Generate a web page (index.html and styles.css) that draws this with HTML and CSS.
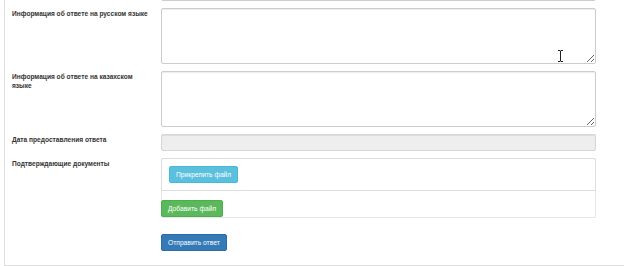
FILE: index.html
```html
<!DOCTYPE html>
<html lang="ru">
<head>
<meta charset="utf-8">
<title>Ответ</title>
<link rel="stylesheet" href="styles.css">
</head>
<body>
<div class="panel">
  <form class="form">
    <div class="row">
      <div class="label"></div>
      <div class="field"><input class="control" type="text"></div>
    </div>
    <div class="row">
      <label class="label">Информация об ответе на русском языке</label>
      <div class="field cursor-host">
        <textarea class="control area"></textarea>
        <svg class="ibeam" width="7" height="12" viewBox="0 0 7 12"><path d="M1 0.5h2l0.5 0.5 0.5-0.5h2M3.5 1v10M1 11.5h2l0.5-0.5 0.5 0.5h2" fill="none" stroke="#222" stroke-width="1"/></svg>
      </div>
    </div>
    <div class="row">
      <label class="label">Информация об ответе на казахском языке</label>
      <div class="field"><textarea class="control area"></textarea></div>
    </div>
    <div class="row">
      <label class="label">Дата предоставления ответа</label>
      <div class="field"><input class="control disabled" type="text" disabled></div>
    </div>
    <div class="row">
      <label class="label">Подтверждающие документы</label>
      <div class="field">
        <div class="files">
          <div class="attach"><button type="button" class="btn btn-info">Прикрепить файл</button></div>
          <div class="add"><button type="button" class="btn btn-success">Добавить файл</button></div>
        </div>
      </div>
    </div>
    <div class="row submit-row">
      <div class="label"></div>
      <div class="field"><button type="button" class="btn btn-primary">Отправить ответ</button></div>
    </div>
  </form>
</div>
</body>
</html>
```
FILE: styles.css
```css
html, body {
  margin: 0;
  padding: 0;
  overflow: hidden;
  background: #fff;
}
body {
  font-family: "Liberation Sans", Arial, Helvetica, sans-serif;
  font-size: 6.6px;
  line-height: 9px;
  color: #333;
}
.panel {
  margin-left: 4px;
  margin-top: -16px;
  border-left: 1px solid #ddd;
  border-bottom: 1px solid #ddd;
  padding: 0 0 14px 7px;
}
.form {
  display: flex;
  flex-direction: column;
  gap: 7px;
}
.row {
  display: grid;
  grid-template-columns: 149px 435px;
}
.label {
  font-weight: bold;
  padding-top: 1px;
  padding-right: 12px;
  display: block;
}
.field {
  position: relative;
}
.control {
  display: block;
  box-sizing: border-box;
  width: 100%;
  height: 17px;
  margin: 0;
  border: 1px solid #ccc;
  border-radius: 2px;
  background: #fff;
  font: inherit;
  padding: 3px 6px;
  box-shadow: inset 0 1px 1px rgba(0,0,0,.075);
}
.area {
  height: 56px;
  resize: vertical;
}
.disabled {
  background: #eee;
  border-color: #d6d6d6;
}
.files {
  border: 1px solid #e8e8e8;
  border-top: none;
  border-radius: 2px;
}
.attach {
  border: 1px solid #ddd;
  border-radius: 2px 2px 0 0;
  margin: 0 -1px;
  padding: 7px;
}
.add {
  padding-top: 9px;
  margin-left: -1px;
  display: flex;
}
.btn {
  display: inline-block;
  box-sizing: border-box;
  height: 17px;
  padding: 0 6px;
  border: 1px solid transparent;
  border-radius: 2px;
  font-family: inherit;
  font-size: 6.7px;
  line-height: 15px;
  color: #fff;
  cursor: pointer;
}
.btn-info { background: #5bc0de; border-color: #46b8da; }
.btn-success { background: #5cb85c; border-color: #4cae4c; }
.btn-primary { background: #337ab7; border-color: #2e6da4; }
.submit-row { margin-top: 9px; }
.ibeam {
  position: absolute;
  left: 396px;
  top: 42px;
}
```
